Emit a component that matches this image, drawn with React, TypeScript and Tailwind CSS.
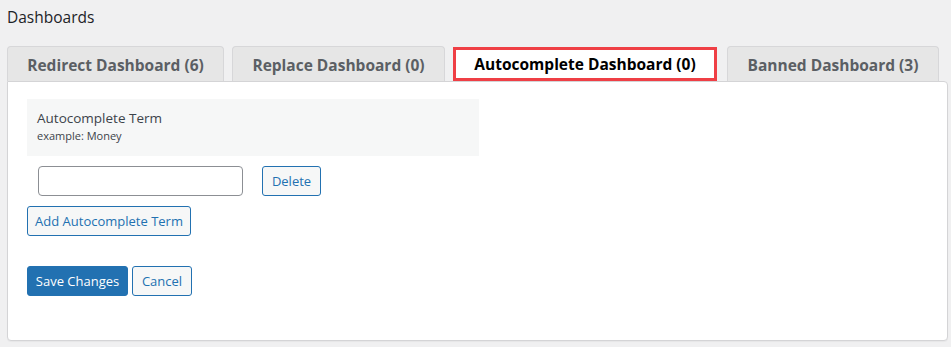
const tabs = [
  { label: 'Redirect Dashboard (6)', w: 'w-[217px]', active: false },
  { label: 'Replace Dashboard (0)', w: 'w-[213px]', active: false },
  { label: 'Autocomplete Dashboard (0)', w: 'w-[264px]', active: true },
  { label: 'Banned Dashboard (3)', w: 'w-[212px]', active: false },
];

export default function App() {
  return (
    <div className="min-h-[347px] bg-[#f0f0f1] pl-[7px] pr-[3px] pt-[7px] font-['Open_Sans',sans-serif] text-[#1d2327]">
      <h1 className="text-[15.5px] leading-[20px] h-[39px]">Dashboards</h1>

      {/* Tabs */}
      <div className="flex items-end h-[35px]">
        {tabs.map((t, i) =>
          t.active ? (
            <div
              key={t.label}
              className={`${t.w} h-[34px] ml-[8px] mr-[10px] pt-[2px] border-[3px] border-[#ef3f45] bg-white flex items-center justify-center text-[15.5px] font-bold text-black relative z-10`}
            >
              {t.label}
            </div>
          ) : (
            <div
              key={t.label}
              className={`${t.w} h-[35px] pt-[3px] ${i === 1 ? 'ml-[8px]' : ''} border border-b-0 border-[#d7d7d9] rounded-t-[4px] bg-[#e6e6e6] flex items-center justify-center text-[15.5px] font-bold text-[#5b5f64]`}
            >
              {t.label}
            </div>
          )
        )}
      </div>

      {/* Panel */}
      <div className="h-[260px] bg-white border border-[#d4d4d6] rounded-[4px] rounded-tl-none shadow-[0_1px_1px_rgba(0,0,0,0.04)] px-[19px] pt-[17px]">
        <div className="w-[452px] h-[57px] bg-[#f6f7f7] pl-[10px] pt-[10px]">
          <div className="text-[13.5px] leading-[18px] text-[#3c434a]">Autocomplete Term</div>
          <div className="text-[11px] leading-[16px] text-[#3c434a] mt-[1px]">example: Money</div>
        </div>

        <div className="flex items-center mt-[10px] ml-[11px] gap-[19px]">
          <input
            type="text"
            className="w-[205px] h-[30px] border border-[#8c8f94] rounded-[4px] bg-white px-2 text-[13px] outline-none"
          />
          <button className="h-[30px] w-[59px] pt-[1px] border border-[#2271b1] rounded-[3px] bg-[#f6f7f7] text-[13px] text-[#2271b1]">
            Delete
          </button>
        </div>

        <button className="mt-[10px] h-[30px] w-[164px] pt-[1px] border border-[#2271b1] rounded-[3px] bg-[#f6f7f7] text-[13px] text-[#2271b1]">
          Add Autocomplete Term
        </button>

        <div className="flex gap-[4px] mt-[30px]">
          <button className="h-[30px] w-[101px] pt-[1px] border border-[#2271b1] rounded-[3px] bg-[#2271b1] text-[13px] text-white">
            Save Changes
          </button>
          <button className="h-[30px] w-[60px] pt-[1px] border border-[#2271b1] rounded-[3px] bg-[#f6f7f7] text-[13px] text-[#2271b1]">
            Cancel
          </button>
        </div>
      </div>
    </div>
  );
}
